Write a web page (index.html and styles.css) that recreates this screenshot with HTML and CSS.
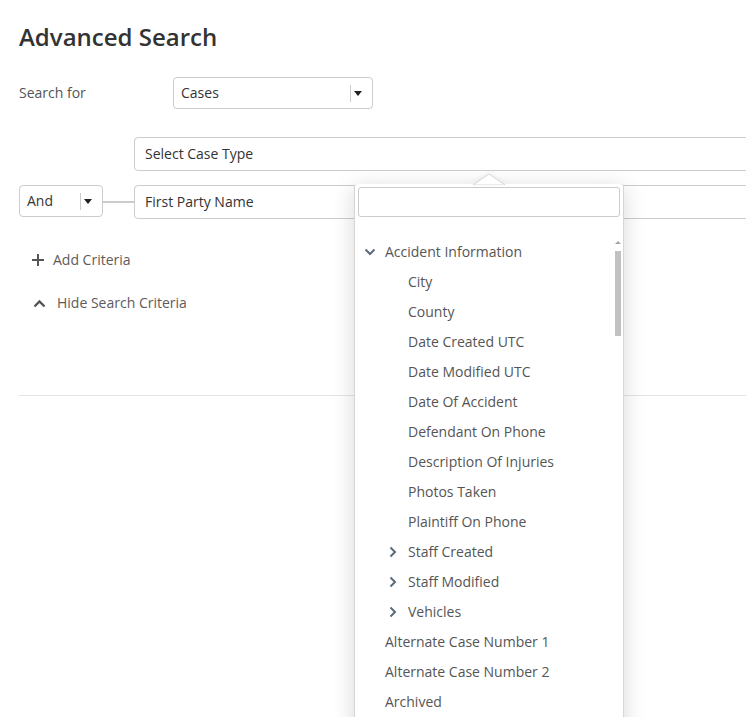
FILE: index.html
```html
<html>
  <head>
    <title>Advanced Search</title>
    <link rel="stylesheet" href="styles.css">
  </head>
  <body>
    <div class="page">
      <h1 class="title">Advanced Search</h1>

      <div class="row search-for">
        <label class="label">Search for</label>
        <div class="select select-cases">
          <span class="select-value">Cases</span>
          <span class="select-toggle"><i class="caret"></i></span>
        </div>
      </div>

      <div class="row case-type">
        <div class="field">Select Case Type</div>
      </div>

      <div class="row criteria">
        <div class="select select-op">
          <span class="select-value">And</span>
          <span class="select-toggle"><i class="caret"></i></span>
        </div>
        <span class="connector"></span>
        <div class="field field-picker">
          First Party Name

          <!-- field picker popup -->
          <div class="picker">
            <svg class="picker-arrow" width="32" height="12" viewBox="0 0 32 12"><polygon points="0,12 16,1 32,12" fill="#fff" stroke="#d6d6d6" stroke-width="1"/></svg>
            <input class="picker-search" type="text">
            <div class="tree">
              <div class="node depth0 open"><span class="twist"><svg width="12" height="12" viewBox="0 0 12 12"><polyline points="1.5,3.5 6,8 10.5,3.5"/></svg></span>Accident Information</div>
              <div class="node depth1"><span class="twist"></span>City</div>
              <div class="node depth1"><span class="twist"></span>County</div>
              <div class="node depth1"><span class="twist"></span>Date Created UTC</div>
              <div class="node depth1"><span class="twist"></span>Date Modified UTC</div>
              <div class="node depth1"><span class="twist"></span>Date Of Accident</div>
              <div class="node depth1"><span class="twist"></span>Defendant On Phone</div>
              <div class="node depth1"><span class="twist"></span>Description Of Injuries</div>
              <div class="node depth1"><span class="twist"></span>Photos Taken</div>
              <div class="node depth1"><span class="twist"></span>Plaintiff On Phone</div>
              <div class="node depth1"><span class="twist"><svg width="12" height="12" viewBox="0 0 12 12"><polyline points="3.5,1.5 8,6 3.5,10.5"/></svg></span>Staff Created</div>
              <div class="node depth1"><span class="twist"><svg width="12" height="12" viewBox="0 0 12 12"><polyline points="3.5,1.5 8,6 3.5,10.5"/></svg></span>Staff Modified</div>
              <div class="node depth1"><span class="twist"><svg width="12" height="12" viewBox="0 0 12 12"><polyline points="3.5,1.5 8,6 3.5,10.5"/></svg></span>Vehicles</div>
              <div class="node depth0"><span class="twist"></span>Alternate Case Number 1</div>
              <div class="node depth0"><span class="twist"></span>Alternate Case Number 2</div>
              <div class="node depth0"><span class="twist"></span>Archived</div>
            </div>
            <div class="scrollbar"><i class="scroll-up"></i><i class="scroll-thumb"></i></div>
          </div>
        </div>
      </div>

      <div class="actions">
        <a class="action add"><svg width="12" height="12" viewBox="0 0 12 12"><path d="M6 0v12M0 6h12"/></svg>Add Criteria</a>
        <a class="action hide"><svg width="13" height="9" viewBox="0 0 13 9"><polyline points="1.5,7.5 6.5,2.5 11.5,7.5"/></svg>Hide Search Criteria</a>
      </div>

      <hr class="divider">
    </div>
  </body>
</html>
```

FILE: styles.css
```css
body {
  margin: 0px;
  padding: 0px;
  overflow: hidden;
  background: #fff;
  font-family: "Open Sans", "Liberation Sans", sans-serif;
  font-size: 14px;
  color: #333;
}

.page {
  width: 820px;
  padding: 19px 0 0 19px;
}

.title {
  margin: 0;
  font-size: 24px;
  line-height: 36px;
  font-weight: 600;
  color: #333;
}

.row { display: flex; align-items: flex-start; }

.search-for { margin-top: 22px; align-items: center; }
.label { width: 154px; color: #555; line-height: 18px; margin-top: -1px; }

.select {
  display: flex;
  align-items: center;
  box-sizing: border-box;
  height: 32px;
  border: 1px solid #ccc;
  border-radius: 4px;
  background: #fff;
}
.select-value { flex: 1; padding-left: 7px; line-height: 28px; }
.select-toggle {
  display: flex;
  align-items: center;
  height: 17px;
  padding: 0 10px 0 3px;
  border-left: 1px solid #ccc;
}
.caret {
  width: 0;
  height: 0;
  border-left: 4px solid transparent;
  border-right: 4px solid transparent;
  border-top: 5px solid #222;
}
.select-cases { width: 200px; }
.select-op { width: 84px; }

.field {
  box-sizing: border-box;
  width: 700px;
  height: 34px;
  padding: 0 10px;
  line-height: 32px;
  border: 1px solid #ccc;
  border-radius: 4px;
  background: #fff;
}

.case-type { margin-top: 28px; padding-left: 115px; }
.criteria { margin-top: 14px; }

.connector {
  width: 31px;
  height: 2px;
  margin-top: 16px;
  background: #ccc;
}

.field-picker { position: relative; }

/* popup */
.picker {
  position: absolute;
  left: 219px;
  top: -2px;
  z-index: 2;
  box-sizing: border-box;
  width: 270px;
  height: 560px;
  padding: 3px;
  background: #fff;
  border: 1px solid #d6d6d6;
  border-top: 0;
  border-radius: 3px 3px 0 0;
  box-shadow: 0 4px 22px rgba(0,0,0,0.16);
  line-height: 20px;
}
.picker-arrow {
  position: absolute;
  left: 118px;
  top: -11px;
  filter: drop-shadow(0 -1px 2px rgba(0,0,0,0.06));
}
.picker-search {
  display: block;
  box-sizing: border-box;
  width: 262px;
  height: 30px;
  margin: 0;
  border: 1px solid #ccc;
  border-radius: 3px;
  font: inherit;
}

.tree { margin-top: 20px; color: #555; }
.node {
  display: flex;
  align-items: center;
  height: 30px;
  white-space: nowrap;
}
.depth0 { padding-left: 4px; }
.depth1 { padding-left: 27px; }
.twist { width: 23px; flex: none; display: flex; align-items: center; }
.twist svg { margin-left: 2px; fill: none; stroke: #5b6a7a; stroke-width: 2; }

.scrollbar {
  position: absolute;
  right: 1px;
  top: 53px;
  width: 8px;
}
.scroll-up {
  display: block;
  width: 0;
  height: 0;
  margin: 4px auto 0;
  border-left: 3px solid transparent;
  border-right: 3px solid transparent;
  border-bottom: 3px solid #a3a3a3;
}
.scroll-thumb {
  display: block;
  width: 6px;
  height: 85px;
  margin: 7px auto 0;
  background: #c1c1c1;
}

/* criteria links */
.actions {
  display: flex;
  flex-direction: column;
  gap: 23px;
  margin-top: 31px;
}
.action {
  display: flex;
  align-items: center;
  line-height: 20px;
  color: #5f5a5a;
  text-decoration: none;
}
.action svg { fill: none; stroke: #555; stroke-width: 2; }
.add { padding-left: 13px; }
.add svg { margin-right: 9px; }
.hide { padding-left: 14px; }
.hide svg { margin-right: 11px; stroke-width: 2.4; }

.divider {
  margin: 82px 0 0 0;
  border: 0;
  border-top: 1px solid #e5e5e5;
}
```
